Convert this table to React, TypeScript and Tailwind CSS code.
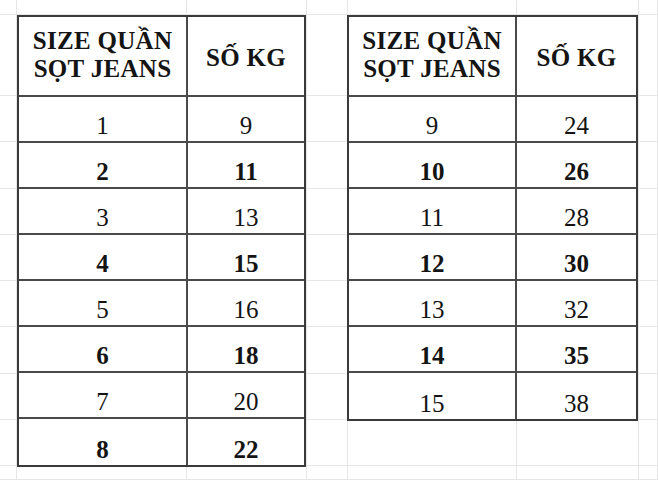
import React from "react";

type Row = { a: string; b: string; bold: boolean };

const leftRows: Row[] = [
  { a: "1", b: "9", bold: false },
  { a: "2", b: "11", bold: true },
  { a: "3", b: "13", bold: false },
  { a: "4", b: "15", bold: true },
  { a: "5", b: "16", bold: false },
  { a: "6", b: "18", bold: true },
  { a: "7", b: "20", bold: false },
  { a: "8", b: "22", bold: true },
];

const rightRows: Row[] = [
  { a: "9", b: "24", bold: false },
  { a: "10", b: "26", bold: true },
  { a: "11", b: "28", bold: false },
  { a: "12", b: "30", bold: true },
  { a: "13", b: "32", bold: false },
  { a: "14", b: "35", bold: true },
  { a: "15", b: "38", bold: false },
];

function SizeTable({ rows, gridClass }: { rows: Row[]; gridClass: string }) {
  return (
    <div className={gridClass}>
      <div className="flex items-center justify-center border-r-2 border-b-2 border-[#4a4a4a] pb-[2px] text-center font-bold leading-[28px] tracking-[0.3px]">
        <span>
          SIZE QUẦN
          <br />
          SỌT JEANS
        </span>
      </div>
      <div className="flex items-center justify-center border-b-2 border-[#4a4a4a] pt-[4px] font-bold tracking-[0.3px]">
        SỐ KG
      </div>
      {rows.map((r, i) => {
        const last = i === rows.length - 1;
        const weight = r.bold ? "font-bold" : "font-normal";
        return (
          <React.Fragment key={r.a}>
            <div
              className={
                "flex items-end justify-center pb-[3px] leading-none border-r-2 border-[#4a4a4a] " +
                weight +
                (last ? "" : " border-b-2")
              }
            >
              {r.a}
            </div>
            <div
              className={
                "flex items-end justify-center pb-[3px] leading-none border-[#4a4a4a] " +
                weight +
                (last ? "" : " border-b-2")
              }
            >
              {r.b}
            </div>
          </React.Fragment>
        );
      })}
    </div>
  );
}

export default function App() {
  const bgCells = Array.from({ length: 77 });
  return (
    <div
      className="grid h-[480px] w-[658px] overflow-hidden bg-white text-[25px] text-[#141414]"
      style={{ fontFamily: '"Liberation Serif", "Times New Roman", serif' }}
    >
      <div className="col-start-1 row-start-1 grid grid-cols-[17px_170px_120px_41px_169px_122px_1fr] grid-rows-[15px_81px_repeat(8,46.25px)_1fr]">
        {bgCells.map((_, i) => (
          <div key={i} className="border-r border-b border-[#e6e6e6]" />
        ))}
      </div>
      <div className="col-start-1 row-start-1 grid grid-cols-[17px_170px_119px_41px_169px_122px_1fr] grid-rows-[15px_82px_repeat(8,46.25px)_1fr]">
        <SizeTable
          rows={leftRows}
          gridClass="col-start-2 col-span-2 row-start-2 row-span-9 grid grid-cols-[169px_1fr] grid-rows-[80px_repeat(8,1fr)] border-2 border-[#3a3a3a] bg-white"
        />
        <SizeTable
          rows={rightRows}
          gridClass="col-start-5 col-span-2 row-start-2 row-span-8 grid grid-cols-[168px_1fr] grid-rows-[80px_repeat(7,1fr)] border-2 border-[#3a3a3a] bg-white"
        />
      </div>
    </div>
  );
}
